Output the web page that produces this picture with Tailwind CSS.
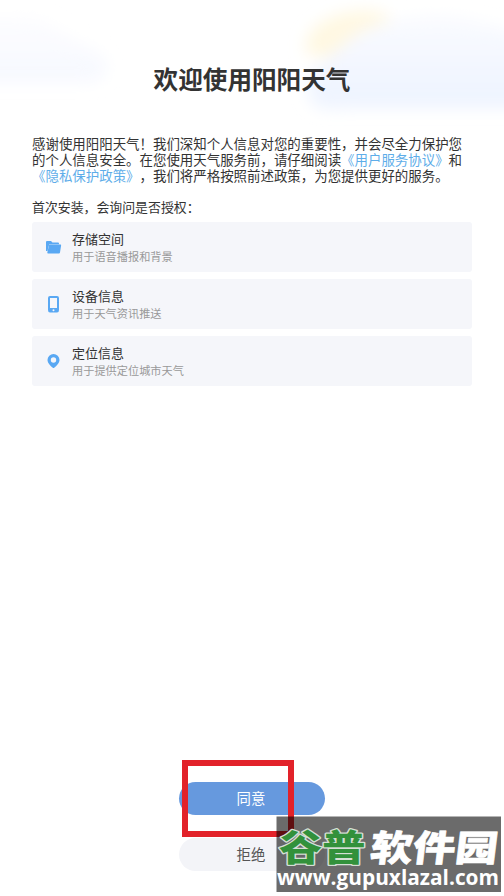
<!DOCTYPE html>
<html lang="zh-CN">
<head>
<meta charset="utf-8">
<title>欢迎使用阳阳天气</title>
<script src="https://cdn.jsdelivr.net/npm/@tailwindcss/browser@4"></script>
</head>
<body class="bg-white">
<main class="relative flex h-[896px] w-[504px] flex-col overflow-hidden bg-white px-8 font-['Noto_Sans_CJK_SC',sans-serif] text-[#333] [text-spacing-trim:space-all]">
  <svg class="absolute left-0 top-0" width="504" height="135" viewBox="0 0 504 135" aria-hidden="true">
    <defs>
      <filter id="soft" x="-30%" y="-30%" width="160%" height="160%"><feGaussianBlur stdDeviation="8"/></filter>
      <linearGradient id="cloud" x1="0" y1="0" x2="0" y2="1"><stop offset="0" stop-color="#fafbff"/><stop offset="1" stop-color="#edf3ff"/></linearGradient>
      <linearGradient id="haze" x1="0" y1="0" x2="0" y2="1"><stop offset="0" stop-color="#fdfdff"/><stop offset="1" stop-color="#f6f8fe"/></linearGradient>
    </defs>
    <g filter="url(#soft)">
      <path d="M-30 16H25C50 18 65 37 90 48C112 56 114 80 88 82H-30Z" fill="url(#haze)"/>
      <path d="M306 54C302 30 325 16 350 12C375 8 397 12 390 32L330 58Z" fill="#fff8e2"/>
      <path d="M308 90C304 70 332 56 352 38C377 18 440 10 470 20C500 28 520 30 540 50V108H345C320 110 308 106 308 90Z" fill="url(#cloud)"/>
    </g>
  </svg>

  <h1 class="relative mt-[60px] text-center text-[24.6px] leading-9 font-bold whitespace-nowrap">欢迎使用阳阳天气</h1>

  <p class="relative mt-[40px] text-[13.44px] leading-[15.8px] whitespace-nowrap">感谢使用阳阳天气！我们深知个人信息对您的重要性，并会尽全力保护您<br>的个人信息安全。在您使用天气服务前，请仔细阅读<a class="text-[#5eade9]">《用户服务协议》</a>和<br><a class="text-[#5eade9]">《隐私保护政策》</a>，我们将严格按照前述政策，为您提供更好的服务。</p>
  <p class="mt-[15.6px] text-[12.9px] leading-4">首次安装，会询问是否授权：</p>

  <ul class="mt-[7px] flex flex-col gap-[6.5px]">
    <li class="flex h-[50.5px] items-center rounded-[3px] bg-[#f5f6fa] pl-[13px]">
      <svg class="mr-[10px] shrink-0" width="17" height="16" viewBox="0 0 17 16" fill="#59a8f3"><path d="M1 12V3Q1 2 2 2H6L7.5 3.5H13Q14 3.5 14 4.5V5.2H4.2L2.5 12Z"/><path d="M4.2 5.6H15.5Q16.3 5.6 16.1 6.6L15 13.5Q14.8 14.5 14 14.5H3Q2.2 14.5 2.3 13.5Z"/></svg>
      <div><h2 class="text-[13px] leading-[18px]">存储空间</h2><p class="text-[11.2px] leading-[17px] text-[#999]">用于语音播报和背景</p></div>
    </li>
    <li class="flex h-[50.5px] items-center rounded-[3px] bg-[#f5f6fa] pl-[13px]">
      <svg class="mr-[10px] shrink-0" width="17" height="18" viewBox="0 0 17 18"><path fill="#59a8f3" fill-rule="evenodd" d="M5 1H12Q14 1 14 3V15Q14 17.5 12 17.5H5Q3 17.5 3 15V3Q3 1 5 1ZM5 3V13H12V3ZM8.5 14.2A1 1 0 1 0 8.5 16.2A1 1 0 1 0 8.5 14.2Z"/></svg>
      <div><h2 class="text-[13px] leading-[18px]">设备信息</h2><p class="text-[11.2px] leading-[17px] text-[#999]">用于天气资讯推送</p></div>
    </li>
    <li class="flex h-[50.5px] items-center rounded-[3px] bg-[#f5f6fa] pl-[13px]">
      <svg class="mr-[10px] shrink-0" width="17" height="16" viewBox="0 0 17 16"><path fill="#59a8f3" fill-rule="evenodd" d="M8.5 1A6 6 0 0 1 14.5 7C14.5 10 11.5 12.8 9.2 14.8Q8.5 15.3 7.8 14.8C5.5 12.8 2.5 10 2.5 7A6 6 0 0 1 8.5 1ZM8.5 4.3A2.7 2.7 0 1 0 8.5 9.7A2.7 2.7 0 1 0 8.5 4.3Z"/></svg>
      <div><h2 class="text-[13px] leading-[18px]">定位信息</h2><p class="text-[11.2px] leading-[17px] text-[#999]">用于提供定位城市天气</p></div>
    </li>
  </ul>

  <div class="mt-auto mb-[25px] flex flex-col items-center gap-[23px]">
    <button class="h-[33px] w-[146px] rounded-full bg-[#6699de] pr-[2px] pb-[2px] text-[14.4px] leading-[31px] text-white">同意</button>
    <button class="h-[33px] w-[146px] rounded-full bg-[#f3f4f8] pr-[2px] pb-[2px] text-[14.4px] leading-[31px] text-[#555]">拒绝</button>
  </div>

  <div class="absolute left-[182px] top-[760px] h-[77px] w-[112px] border-[6px] border-[#e2222a]"></div>

  <svg class="absolute left-[276px] top-[816px] overflow-visible" width="226" height="77" viewBox="0 0 226 77">
    <rect x="0.5" y="0.5" width="224.5" height="75.5" fill="#000" fill-opacity=".58"/>
    <g font-family="'Noto Sans CJK SC',sans-serif" font-weight="900" font-size="36" stroke-linejoin="round" paint-order="stroke">
      <text transform="translate(3 45) scale(1.2 1)" x="0" y="0" fill="#32913b" stroke="#d5dfd5" stroke-width="2.6">谷普</text>
      <text transform="translate(93 45) skewX(-7) scale(1.18 1)" x="0" y="0" fill="#fff" stroke="#fff" stroke-width=".6">软件园</text>
    </g>
    <text x="1" y="69" textLength="222" lengthAdjust="spacingAndGlyphs" font-family="'Open Sans','Noto Sans',sans-serif" font-size="21" font-weight="700" fill="#fff">www.gupuxlazal.com</text>
  </svg>
</main>
</body>
</html>
